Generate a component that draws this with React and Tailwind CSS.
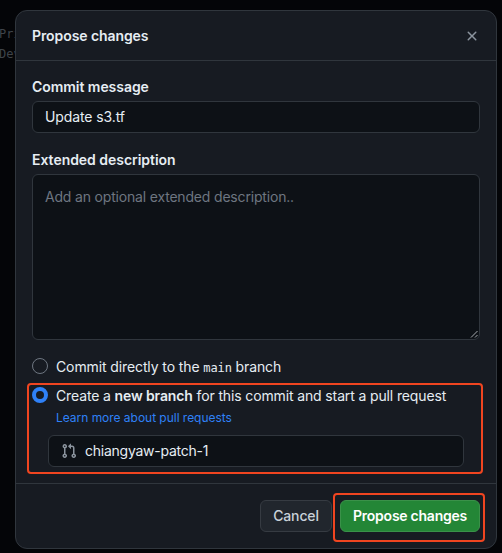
function CloseIcon() {
  return (
    <svg viewBox="0 0 16 16" className="size-4 fill-[#8b949e]" aria-hidden="true">
      <path d="M3.72 3.72a.75.75 0 0 1 1.06 0L8 6.94l3.22-3.22a.749.749 0 0 1 1.275.326.749.749 0 0 1-.215.734L9.06 8l3.22 3.22a.749.749 0 0 1-.326 1.275.749.749 0 0 1-.734-.215L8 9.06l-3.22 3.22a.751.751 0 0 1-1.042-.018.751.751 0 0 1-.018-1.042L6.94 8 3.72 4.78a.75.75 0 0 1 0-1.06Z" />
    </svg>
  );
}

function PullRequestIcon() {
  return (
    <svg viewBox="0 0 16 16" className="size-4 shrink-0 fill-[#8b949e]" aria-hidden="true">
      <path d="M1.5 3.25a2.25 2.25 0 1 1 3 2.122v5.256a2.251 2.251 0 1 1-1.5 0V5.372A2.25 2.25 0 0 1 1.5 3.25Zm5.677-.177L9.573.677A.25.25 0 0 1 10 .854V2.5h1A2.5 2.5 0 0 1 13.5 5v5.628a2.251 2.251 0 1 1-1.5 0V5a1 1 0 0 0-1-1h-1v1.646a.25.25 0 0 1-.427.177L7.177 3.427a.25.25 0 0 1 0-.354ZM3.75 2.5a.75.75 0 1 0 0 1.5.75.75 0 0 0 0-1.5Zm0 9.5a.75.75 0 1 0 0 1.5.75.75 0 0 0 0-1.5Zm8.25.75a.75.75 0 1 0 1.5 0 .75.75 0 0 0-1.5 0Z" />
    </svg>
  );
}

export default function App() {
  return (
    <div className="relative h-[553px] w-[502px] overflow-hidden bg-[#040508] pt-[10px] pl-[15px] font-['Inter','Liberation_Sans',sans-serif] text-sm leading-5 text-[#e6edf3]">
      {/* dimmed page content behind the dialog */}
      <div className="absolute top-[24px] -left-px font-['DejaVu_Sans_Mono',monospace] text-xs leading-5 text-[#3f444a]">
        <div>Pri</div>
        <div>Dev</div>
      </div>

      <div className="relative flex h-[539px] w-[482px] flex-col rounded-xl border border-[#30363d] bg-[#171b22]">
        <header className="flex h-[50px] shrink-0 items-center justify-between border-b border-[#30363d] px-4">
          <h1 className="font-semibold tracking-[-0.08px]">Propose changes</h1>
          <CloseIcon />
        </header>

        <main className="px-4 pt-4">
          <div className="font-semibold tracking-[-0.05px]">Commit message</div>
          <div className="mt-1 flex h-8 items-center rounded-md border border-[#30363d] bg-[#0d1116] px-3 tracking-[-0.1px]">
            Update s3.tf
          </div>

          <div className="mt-[17px] font-semibold tracking-[-0.03px]">Extended description</div>
          <div className="relative mt-1 h-[166px] rounded-md border border-[#30363d] bg-[#0d1116] px-3 pt-3 tracking-[-0.18px] text-[#6e7681]">
            Add an optional extended description..
            <svg viewBox="0 0 8 8" className="absolute right-px bottom-px size-2" aria-hidden="true">
              <path d="M1 7.5 7.5 1M5 7.5 7.5 5" stroke="#b8bcc0" strokeWidth="0.9" />
            </svg>
          </div>

          <div className="mt-[17px] flex gap-2">
            <span className="mt-[1px] size-4 shrink-0 rounded-full border border-[#6e7681]" />
            <span className="tracking-[-0.11px]">
              Commit directly to the{" "}
              <span className="font-['DejaVu_Sans_Mono',monospace] text-xs">main</span> branch
            </span>
          </div>

          <div className="mt-[9px] flex gap-2">
            <span className="mt-[1px] size-4 shrink-0 rounded-full border-4 border-[#2f81f7] bg-[#171b22]" />
            <div className="whitespace-nowrap">
              <div className="tracking-[-0.13px]">
                Create a <b className="font-semibold">new branch</b> for this commit and start a pull request
              </div>
              <div className="mt-[3px] text-xs leading-[18px] tracking-[-0.03px] text-[#2f81f7]">Learn more about pull requests</div>
            </div>
          </div>

          <div className="mx-4 mt-2 flex h-8 items-center gap-2 rounded-md border border-[#30363d] bg-[#0d1116] px-3">
            <PullRequestIcon />
            <span className="tracking-[-0.25px]">chiangyaw-patch-1</span>
          </div>
        </main>

        <footer className="mt-auto flex h-[65px] shrink-0 justify-end gap-2 border-t border-[#30363d] px-4 pt-4">
          <button className="h-8 w-[72px] rounded-md border border-[#363b42] bg-[#21262d] font-medium tracking-[-0.15px] text-[#c9d1d9]">
            Cancel
          </button>
          <button className="h-8 w-[140px] rounded-md border border-[#3a9149] bg-[#238636] font-semibold tracking-[-0.25px] text-white">
            Propose changes
          </button>
        </footer>
      </div>

      {/* highlight annotations */}
      <div className="absolute top-[383px] left-[27px] h-[91px] w-[456px] rounded-[4px] border-2 border-[#f04520]" />
      <div className="absolute top-[493px] left-[333px] h-[49px] w-[152px] rounded-[4px] border-2 border-[#f04520]" />
    </div>
  );
}
